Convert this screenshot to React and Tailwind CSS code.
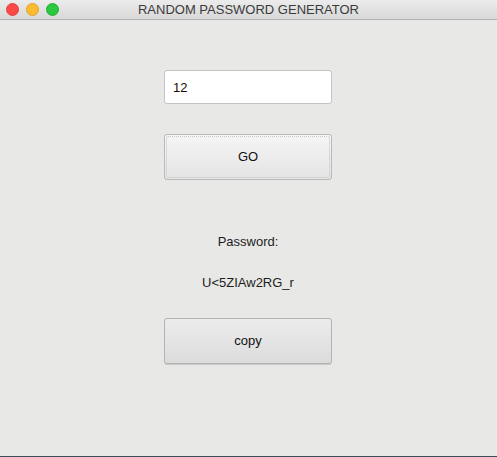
import React, { useState } from 'react'

export default function App(){
  const [len, setLen] = useState('12');
  const [pw] = useState('U<5ZIAw2RG_r');

  return (
    <div className="w-[497px] h-[457px] flex flex-col bg-[#e8e8e6] text-[13px] text-[#1d1d1d] overflow-hidden" style={{fontFamily:'"Liberation Sans", Arial, sans-serif'}}>
      {/* title bar */}
      <div className="relative h-[20px] shrink-0 flex items-center justify-center bg-gradient-to-b from-[#ececec] to-[#d8d8d8] border-b border-[#b3b3b3]">
        <div className="absolute left-[6px] top-[3px] flex gap-[7px]">
          <span className="w-[13px] h-[13px] rounded-full bg-[#fc4b47] border border-[#e0413d]"></span>
          <span className="w-[13px] h-[13px] rounded-full bg-[#fdbb2f] border border-[#e1a227]"></span>
          <span className="w-[13px] h-[13px] rounded-full bg-[#2ac73f] border border-[#25ad34]"></span>
        </div>
        <div className="text-[13px] text-[#3b3b3b]">RANDOM PASSWORD GENERATOR</div>
      </div>

      {/* body */}
      <div className="flex-1 flex flex-col items-center pt-[50px] pr-[1px]">
        <input value={len} onChange={e=> setLen(e.target.value)} className="w-[168px] h-[34px] bg-white border border-[#c4c4c4] rounded-[3px] px-[8px] text-[13px] text-[#1a0a00] outline-none" />

        <button className="mt-[30px] w-[168px] h-[46px] rounded-[3px] bg-gradient-to-b from-[#f5f5f5] to-[#e4e4e4] border border-[#b9b9b9] text-[13px] text-[#111] p-[1px]">
          <div className="h-full w-full border border-dotted border-[#c4c4c4] rounded-[2px] flex items-center justify-center">GO</div>
        </button>

        <div className="mt-[52px] text-[13px]">Password:</div>
        <div className="mt-[21px] text-[13px]">{pw}</div>

        <button className="mt-[26px] w-[168px] h-[46px] rounded-[3px] bg-gradient-to-b from-[#ececec] to-[#dcdcdc] border border-[#b3b3b3] shadow-[0_1px_0_#c8c8c8] flex items-center justify-center text-[13px] text-[#111]">copy</button>
      </div>
      <div className="h-[1px] bg-[#3e4c58] shrink-0"></div>
    </div>
  )
}
